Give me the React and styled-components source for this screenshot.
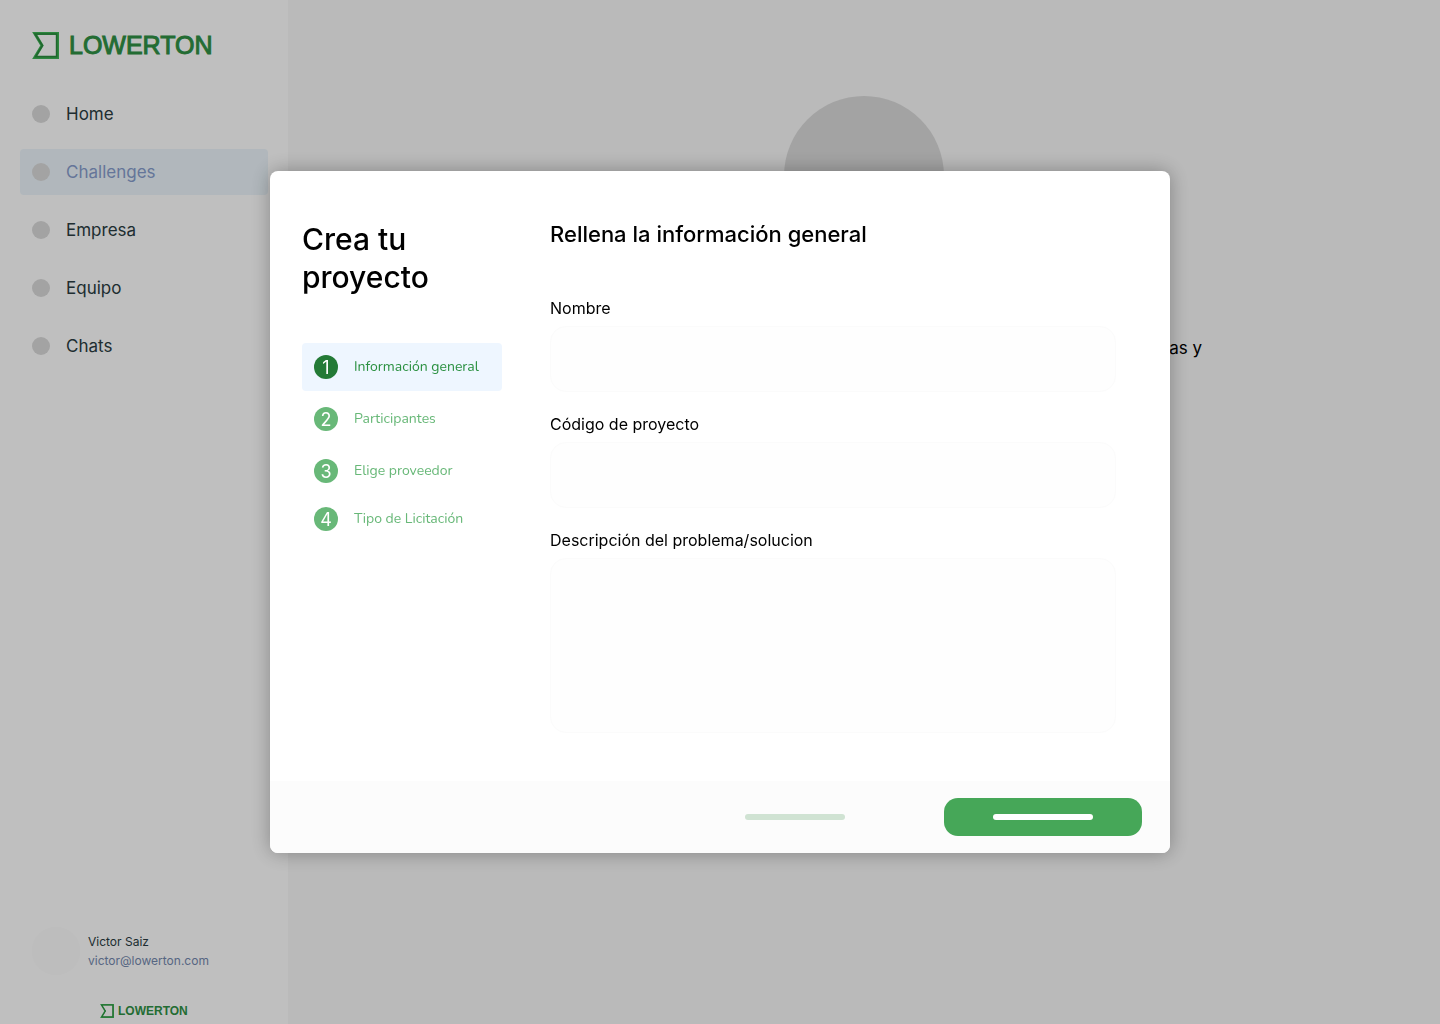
import React, { useState } from 'react';
import styled, { createGlobalStyle } from 'styled-components';

const GlobalStyle = createGlobalStyle`
    * {
        box-sizing: border-box;
    }

    body {
        margin: 0;
        background: #f8f8f8;
        font-family: Inter, 'Liberation Sans', sans-serif;
    }

    button, input, textarea {
        font-family: inherit;
    }
`;

// Page
const Page = styled.div`
    display: flex;
    min-height: 100vh;
`;

const Sidebar = styled.aside`
    display: flex;
    flex-direction: column;
    flex: 0 0 288px;
    padding: 31px 20px 4px;
    background: #ffffff;
`;

const Brand = styled.a`
    display: flex;
    align-items: center;
    gap: ${({ $small }) => ($small ? '4px' : '10px')};
    padding-left: ${({ $small }) => ($small ? '80px' : '12px')};
    color: #2f9145;
    font-family: 'Liberation Sans', Arial, sans-serif;
    font-size: ${({ $small }) => ($small ? '12px' : '25px')};
    line-height: ${({ $small }) => ($small ? '18px' : '29px')};
    font-weight: ${({ $small }) => ($small ? 700 : 400)};
    -webkit-text-stroke: ${({ $small }) => ($small ? '0' : '1px')} currentColor;
    text-decoration: none;
`;

const Nav = styled.nav`
    display: flex;
    flex-direction: column;
    gap: 12px;
    margin-top: 31px;
`;

const NavItem = styled.a`
    display: flex;
    align-items: center;
    gap: 16px;
    height: 46px;
    padding: 0 12px;
    border-radius: 4px;
    background: ${({ $active }) => ($active ? '#ecf5fb' : 'transparent')};
    color: ${({ $active }) => ($active ? '#879dcd' : '#2a3c42')};
    font-size: 17px;
    line-height: 24px;
    text-decoration: none;
`;

const Dot = styled.span`
    width: 18px;
    height: 18px;
    border-radius: 50%;
    background: #dadada;
`;

const Account = styled.div`
    display: flex;
    align-items: center;
    gap: 8px;
    margin-top: auto;
    margin-bottom: 27px;
    padding-left: 12px;
`;

const Avatar = styled.div`
    width: 48px;
    height: 48px;
    border-radius: 50%;
    background: #fcfcfc;
`;

const AccountName = styled.div`
    color: #2a3c42;
    font-size: 12px;
    line-height: 19px;
`;

const AccountMail = styled.a`
    display: block;
    color: #7488ae;
    font-size: 12px;
    line-height: 19px;
    text-decoration: none;
`;

const Main = styled.main`
    display: flex;
    flex: 1;
    flex-direction: column;
    align-items: center;
    padding-top: 96px;
`;

const Illustration = styled.div`
    width: 160px;
    height: 160px;
    border-radius: 50%;
    background: #dadada;
`;

const Message = styled.p`
    width: 100%;
    max-width: 676px;
    margin: 80px 0 0;
    color: #000000;
    font-size: 17px;
    line-height: 24px;
    text-align: right;
`;

// Dialog
const Overlay = styled.div`
    position: fixed;
    inset: 0;
    display: flex;
    align-items: center;
    justify-content: center;
    background: rgba(0, 0, 0, 0.25);
`;

const Dialog = styled.form`
    width: 100%;
    max-width: 900px;
    border-radius: 8px;
    overflow: hidden;
    background: #ffffff;
    box-shadow: 0 0 20px rgba(0, 0, 0, 0.3);
`;

const DialogBody = styled.div`
    display: flex;
    gap: 48px;
    padding: 49px 54px 48px 32px;
`;

const StepsColumn = styled.div`
    flex: 0 0 200px;
`;

const Title = styled.h1`
    margin: 0 0 47px;
    font-size: 30px;
    line-height: 38px;
    font-weight: 500;
`;

const Steps = styled.ol`
    margin: 0;
    padding: 0;
    list-style: none;

    li + li:not(:last-child) {
        margin-top: 4px;
    }
`;

const Step = styled.button`
    display: flex;
    align-items: center;
    gap: 16px;
    width: 100%;
    height: 48px;
    padding: 0 12px;
    border: 0;
    border-radius: 4px;
    background: ${({ $active }) => ($active ? '#eef6ff' : 'transparent')};
    color: ${({ $active }) => ($active ? '#2a9040' : '#68b878')};
    text-align: left;
    cursor: pointer;
`;

const StepLabel = styled.span`
    font-family: Nunito, 'Open Sans', sans-serif;
    font-size: 14px;
    line-height: 20px;
`;

const StepNumber = styled.span`
    width: 24px;
    height: 24px;
    border-radius: 50%;
    background: ${({ $active }) => ($active ? '#237a36' : '#68b878')};
    color: #ffffff;
    font-size: 18px;
    line-height: 25px;
    text-align: center;
`;

const FormColumn = styled.div`
    flex: 1;
    min-width: 0;
`;

const Heading = styled.h2`
    margin: 0 0 47px;
    font-size: 22px;
    line-height: 29px;
    font-weight: 500;
`;

const Field = styled.div`
    display: flex;
    flex-direction: column;
    gap: 6px;

    & + & {
        margin-top: 20px;
    }
`;

const Label = styled.label`
    color: #000000;
    font-size: 16px;
    line-height: 24px;
`;

const TextInput = styled.input`
    width: 100%;
    height: ${({ $tall }) => ($tall ? '175px' : '66px')};
    padding: 16px;
    border: 1px solid #fbfbfb;
    border-radius: 16px;
    outline: none;
    background: #fefefe;
    font-size: 16px;
    resize: none;
`;

const DialogFooter = styled.div`
    display: flex;
    align-items: center;
    justify-content: flex-end;
    gap: 50px;
    height: 72px;
    padding: 0 28px;
    background: #fcfcfc;
`;

const FooterButton = styled.button`
    display: flex;
    align-items: center;
    justify-content: center;
    width: 198px;
    height: 38px;
    border: 0;
    border-radius: 14px;
    background: ${({ $primary }) => ($primary ? '#46a758' : 'transparent')};
    color: ${({ $primary }) => ($primary ? '#ffffff' : '#d0e3d3')};
    cursor: pointer;
`;

const Bar = styled.span`
    width: 100px;
    height: 6px;
    border-radius: 3px;
    background: currentColor;
`;

const navItems = ['Home', 'Challenges', 'Empresa', 'Equipo', 'Chats'];
const steps = ['Información general', 'Participantes', 'Elige proveedor', 'Tipo de Licitación'];

const Logo = ({ small }) => (
    <Brand href="#home" $small={small}>
        <svg width={small ? 14 : 27} height={small ? 14 : 27} viewBox="0 0 27 27" fill="none">
            <path d="M2.8 1.5H25.5V25.5H2.8L10 13.5Z" stroke="#3cb454" strokeWidth="3" />
            <path d="M3 2H24.6V24.6H3.6L10.4 13.5Z" stroke="#2b8a3e" strokeWidth="1.6" />
        </svg>
        LOWERTON
    </Brand>
);

const App = () => {
    const [step, setStep] = useState(0);

    return (
        <>
            <GlobalStyle />
            <Page>
                <Sidebar>
                    <Logo />
                    <Nav>
                        {navItems.map((item) => (
                            <NavItem key={item} href={`#${item.toLowerCase()}`} $active={item === 'Challenges'}>
                                <Dot />
                                {item}
                            </NavItem>
                        ))}
                    </Nav>
                    <Account>
                        <Avatar />
                        <div>
                            <AccountName>Victor Saiz</AccountName>
                            <AccountMail href="mailto:victor@lowerton.com">victor@lowerton.com</AccountMail>
                        </div>
                    </Account>
                    <Logo small />
                </Sidebar>
                <Main>
                    <Illustration />
                    <Message>as y</Message>
                </Main>
            </Page>
            <Overlay>
                <Dialog role="dialog" aria-labelledby="dialog-title" onSubmit={(e) => e.preventDefault()}>
                    <DialogBody>
                        <StepsColumn>
                            <Title id="dialog-title">Crea tu proyecto</Title>
                            <Steps>
                                {steps.map((label, i) => (
                                    <li key={label}>
                                        <Step type="button" $active={i === step} onClick={() => setStep(i)}>
                                            <StepNumber $active={i === step}>{i + 1}</StepNumber>
                                            <StepLabel>{label}</StepLabel>
                                        </Step>
                                    </li>
                                ))}
                            </Steps>
                        </StepsColumn>
                        <FormColumn>
                            <Heading>Rellena la información general</Heading>
                            <Field>
                                <Label htmlFor="nombre">Nombre</Label>
                                <TextInput id="nombre" type="text" />
                            </Field>
                            <Field>
                                <Label htmlFor="codigo">Código de proyecto</Label>
                                <TextInput id="codigo" type="text" />
                            </Field>
                            <Field>
                                <Label htmlFor="descripcion">Descripción del problema/solucion</Label>
                                <TextInput as="textarea" id="descripcion" $tall />
                            </Field>
                        </FormColumn>
                    </DialogBody>
                    <DialogFooter>
                        <FooterButton type="button" aria-label="Cancelar">
                            <Bar />
                        </FooterButton>
                        <FooterButton type="submit" aria-label="Siguiente" $primary>
                            <Bar />
                        </FooterButton>
                    </DialogFooter>
                </Dialog>
            </Overlay>
        </>
    );
};

export default App;
